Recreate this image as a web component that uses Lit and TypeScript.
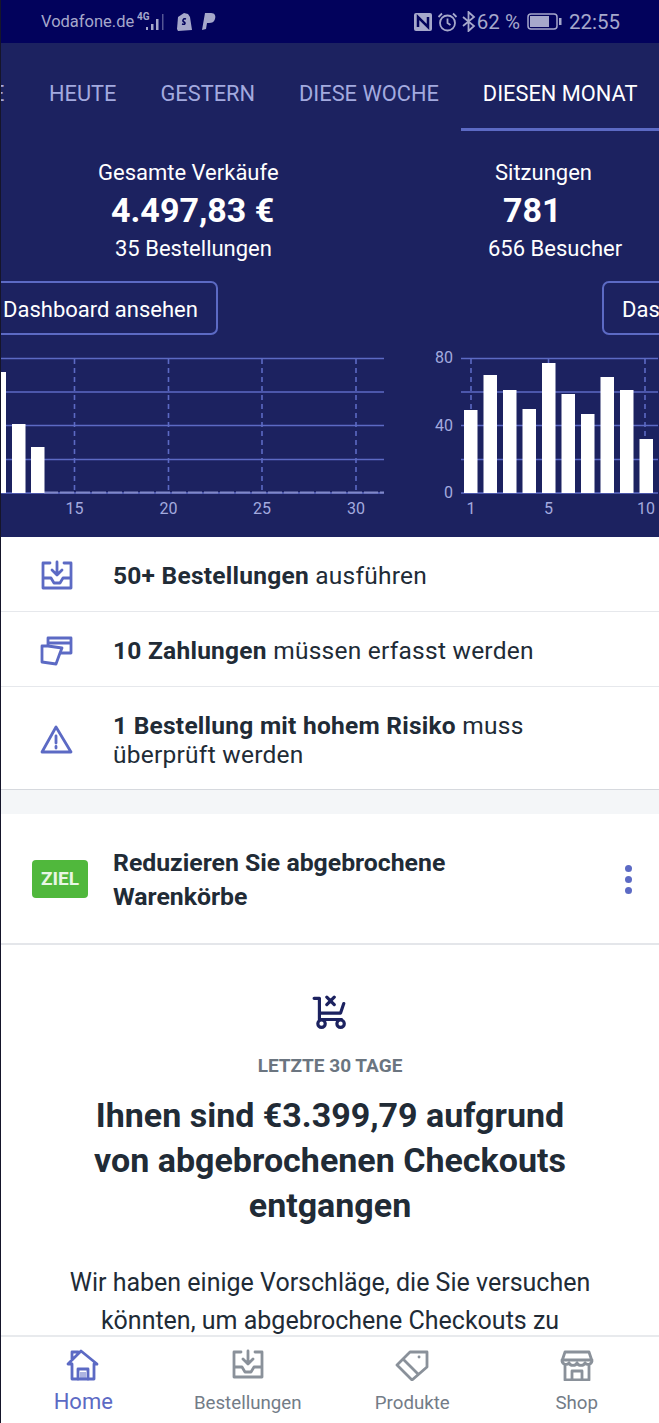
import { LitElement, html, css, svg } from 'lit';
import { customElement } from 'lit/decorators.js';

const GRID = '#5c6ac4';
const AXIS = '#a3aadf';

const icons = {
  inbox: svg`<path d="M10 3H3v25h28V3h-7M3 18h8l3 5h6l3-5h8M17 2v12M12 10l5 5 5-5"/>`,
  cards: svg`<path d="M8 10V3h23v15H21M8 8h23"/><path d="M2 11h6l14 2-2 5-4 11-14-2z"/>`,
  alert: svg`<path d="M16 3 2 28h29zM16 12v7"/><path d="M16 22.500v1.500"/>`,
  home: svg`<path d="M2 15 15 2l16 13h-3v15H6V15zM6 11V3h6"/><path d="M12 30V20h10v10"/><path d="M14 23h6v6h-6z" fill="currentColor" stroke="none" opacity=".5"/>`,
  tag: svg`<path d="M15 3h17v15L17 31 2 16zM8 10l15 15"/><path d="M24 8h.1"/>`,
  store: svg`<path d="M5 3h24l3 9a4 4 0 0 1-7 2 4.500 4.500 0 0 1-8 0 4.500 4.500 0 0 1-8 0 4 4 0 0 1-7-2zM2 11h30M5 16v15h24V16M12 31v-9h10v9"/>`,
};

const icon = (name: keyof typeof icons, cls = '') =>
  html`<svg class="icon ${cls}" viewBox="0 0 34 32">${icons[name]}</svg>`;

const gridLines = (x1: number, x2: number) =>
  [358.5, 392, 425.5, 459.5, 493].map(
    (y) => svg`<line x1=${x1} x2=${x2} y1=${y} y2=${y} stroke=${GRID} stroke-width="1.6"/>`
  );

const dashes = (xs: number[]) =>
  xs.map(
    (x) =>
      svg`<line x1=${x} x2=${x} y1="359" y2="490" stroke=${GRID} stroke-width="1.6" stroke-dasharray="5 4"/>`
  );

const bars = (list: number[][]) =>
  list.map(([x, top]) => svg`<rect x=${x} y=${top} width="13.500" height=${493 - top} fill="#fff"/>`);

const labels = (list: [string, number, number, string?][]) =>
  list.map(
    ([t, x, y, anchor]) =>
      svg`<text x=${x} y=${y} fill=${AXIS} font-size="16" text-anchor=${anchor ?? 'middle'}>${t}</text>`
  );

const salesChart = svg`
  ${gridLines(0, 384)}
  ${dashes([74.5, 168.5, 262, 356])}
  <path d="M44 492.500H384" stroke="#8088c8" stroke-width="2" stroke-dasharray="14 2"/>
  ${bars([[-7.500, 372], [12, 424], [31, 447]])}
  ${labels([['15', 74.5, 514], ['20', 168.5, 514], ['25', 262, 514], ['30', 356, 514]])}
`;

const visits = [410, 375, 390, 409, 363, 394, 414, 377, 390, 439, 377];
const visitsChart = svg`
  ${gridLines(61, 259)}
  ${dashes([71, 148.5, 245])}
  ${bars(visits.map((top, i) => [64 + i * 19.5, top]))}
  ${labels([
    ['80', 53, 363, 'end'], ['40', 53, 431, 'end'], ['0', 53, 498, 'end'],
    ['1', 71, 514], ['5', 148.5, 514], ['10', 246, 514],
  ])}
`;

@customElement('app-root')
export class AppRoot extends LitElement {
  static styles = css`
    :host {
      display: flex;
      flex-direction: column;
      height: 1423px;
      overflow: hidden;
      background: #fff;
      color: #212b36;
      font-family: Roboto, 'Noto Sans', sans-serif;
      box-sizing: border-box;
      border-left: 1px solid #15152a;
    }
    .icon {
      fill: none;
      stroke: currentColor;
      stroke-width: 2.8;
      stroke-linejoin: round;
      stroke-linecap: round;
      flex: none;
    }

    .status {
      height: 43px;
      flex: none;
      background: #02025c;
      color: #a6a8cb;
      display: flex;
      align-items: center;
      padding: 0 39px 0 40px;
      font-size: 16.500px;
    }
    .status svg { flex: none; }
    .carrier { margin-right: 3px; }
    .status-right {
      margin-left: auto;
      display: flex;
      align-items: center;
      gap: 4px;
      font-size: 20.500px;
    }
    .status-right .clock { margin-left: 3px; }
    .status-right .pct { margin-left: -3px; }
    .status-right .batt { margin-left: 3px; }
    .shop { margin-left: 9px; }
    .pp { margin-left: 9px; }

    .hero {
      flex: none;
      height: 494px;
      background: #1c2260;
      overflow: hidden;
    }
    .tabs {
      display: flex;
      height: 88px;
      font-size: 21.800px;
      color: #a3aadf;
      white-space: nowrap;
    }
    .tab {
      padding: 37px 22px 0;
      box-sizing: border-box;
      line-height: 27px;
    }
    .tab.cut { margin-left: -22px; padding-right: 23px; width: 48px; padding-left: 13px; }
    .tab.on {
      color: #fff;
      border-bottom: 3px solid #5c6ac4;
      flex: 1;
    }

    .cards { display: flex; }
    .card { flex: none; width: 400px; color: #fff; font-size: 22px; }
    .card.b { width: 258px; }
    .stat { height: 29px; line-height: 29px; white-space: nowrap; }
    .stat.first { margin-top: 27px; }
    .value { height: 47px; line-height: 47px; font-size: 34px; font-weight: 700; white-space: nowrap; }
    .a .label { margin-left: 97px; }
    .a .value { margin-left: 110px; }
    .a .sub { margin-left: 114px; }
    .b .label { margin-left: 94px; }
    .b .value { margin-left: 102px; }
    .b .sub { margin-left: 87px; }
    .btn {
      display: inline-block;
      box-sizing: border-box;
      height: 54px;
      line-height: 54px;
      margin-top: 18px;
      border: 2px solid #5c6ac4;
      border-radius: 7px;
      font-size: 22px;
      white-space: nowrap;
      padding: 0 18px 0 20px;
    }
    .btn span { display: block; height: 50px; }
    .a .btn { margin-left: -20px; }
    .b .btn { margin-left: 201px; padding-left: 18px; }
    .chart {
      display: block;
      height: 187px;
      margin: 15px 0 0 -1px;
      font-family: Roboto, sans-serif;
    }
    .a .chart { width: 400px; }
    .b .chart { width: 258px; }

    main { flex: 1; min-height: 0; overflow: hidden; background: #fff; }
    .row {
      display: flex;
      align-items: center;
      box-sizing: border-box;
      height: 75px;
      padding-top: 3px;
      border-bottom: 1px solid #e6e8ec;
      font-size: 24.500px;
      line-height: 29px;
    }
    .row.tall { height: 103px; border-bottom: 1px solid #d6d9de; }
    .row .icon {
      width: 34px;
      height: 32px;
      margin: 0 39px 0 39px;
      color: #5c6ac4;
    }
    .row-text { letter-spacing: 0.25px; padding-right: 100px; }
    b { font-weight: 700; }
    .band { height: 24px; background: #f4f6f8; }
    .goal {
      display: flex;
      align-items: center;
      height: 131px;
      padding-top: 2px;
      border-bottom: 2px solid #e4e6ea;
      box-sizing: border-box;
    }
    .pill {
      width: 56px;
      height: 38px;
      line-height: 38px;
      margin: -2px 25px 0 31px;
      text-align: center;
      border-radius: 4px;
      background: #50b83c;
      color: #e8f6e4;
      font-size: 19px;
      font-weight: 700;
      flex: none;
    }
    .goal-title { flex: 1; font-size: 24.800px; line-height: 34px; font-weight: 700; }
    .more { display: flex; flex-direction: column; gap: 4px; margin-right: 27px; }
    .more i { width: 7px; height: 7px; border-radius: 50%; background: #5c6ac4; }

    .advice { text-align: center; padding-top: 48px; }
    .cart { display: block; width: 36px; height: 36px; margin: 0 auto; color: #1c2260; stroke-width: 3; }
    .period { margin-top: 25px; font-size: 19px; line-height: 24px; font-weight: 700; color: #6b7580; }
    h2 { margin: 15px 0 0; font-size: 34px; line-height: 45px; font-weight: 700; }
    .advice p { margin: 36px 0 0; font-size: 25px; line-height: 38px; }

    nav {
      flex: none;
      height: 86px;
      display: grid;
      grid-template-columns: repeat(4, 1fr);
      border-top: 2px solid #e8eaed;
      background: #fff;
      color: #737c87;
      font-size: 18.700px;
    }
    .item { display: flex; flex-direction: column; align-items: center; padding-top: 12px; }
    .item .icon { width: 34px; height: 32px; color: #8a919a; }
    .item span { line-height: 24px; margin-top: 10px; }
    .item.on { color: #5c6ac4; font-size: 22px; }
    .item.on .icon { color: #5c6ac4; }
    .item.on span { margin-top: 9px; }
  `;

  render() {
    return html`
      <div class="status">
        <span class="carrier">Vodafone.de</span>
        <svg width="30" height="22" viewBox="0 0 30 22" fill="currentColor">
          <text x="0" y="9" font-size="10" font-weight="700">4G</text>
          <rect x="9" y="16" width="2" height="3"/><rect x="14" y="13" width="2.500" height="6"/>
          <rect x="19" y="8" width="2.500" height="11"/><rect x="25" y="3" width="1.500" height="16" opacity=".5"/>
        </svg>
        <svg class="shop" width="17" height="19" viewBox="0 0 17 19">
          <path d="M2 5 8 1l4 1 2 3 2 13-14 1-1-2z" fill="currentColor"/>
          <path d="M10 7c-3-1-4 2-2 3s1 3-2 2" stroke="#02025c" stroke-width="1.500" fill="none"/>
        </svg>
        <svg class="pp" width="14" height="18" viewBox="0 0 14 18" fill="currentColor">
          <path d="M3 0h6c4 0 5 3 4 6-1 3-3 4-6 4H5l-1 6-4 1z"/>
        </svg>
        <div class="status-right">
          <svg width="20" height="20" viewBox="0 0 20 20">
            <rect x="1" y="1" width="18" height="18" rx="2" fill="currentColor"/>
            <path d="M5 15V5l10 10V5" stroke="#02025c" stroke-width="2.500" fill="none"/>
          </svg>
          <svg width="21" height="20" viewBox="0 0 21 20" fill="none" stroke="currentColor" stroke-width="1.800">
            <circle cx="10.500" cy="11" r="7.500"/><path d="M10.500 6.500V11l3 2M1.500 5 5 1.500M16 1.500 19.500 5"/>
          </svg>
          <svg width="14" height="21" viewBox="0 0 14 21" fill="none" stroke="currentColor" stroke-width="1.800">
            <path d="m1 6 11 9-5.500 5V1L12 6 1 15"/>
          </svg>
          <span class="pct">62 %</span>
          <svg class="batt" width="35" height="17" viewBox="0 0 35 17">
            <rect x="1" y="1" width="29" height="15" rx="3" fill="none" stroke="currentColor" stroke-width="1.500"/>
            <rect x="3" y="3" width="19" height="11" fill="currentColor"/>
            <rect x="32" y="5" width="2.500" height="7" fill="currentColor"/>
          </svg>
          <span class="clock">22:55</span>
        </div>
      </div>

      <section class="hero">
        <div class="tabs">
          <div class="tab cut">E</div>
          <div class="tab">HEUTE</div>
          <div class="tab">GESTERN</div>
          <div class="tab">DIESE WOCHE</div>
          <div class="tab on">DIESEN MONAT</div>
        </div>
        <div class="cards">
          <div class="card a">
            <div class="stat label first">Gesamte Verkäufe</div>
            <div class="value">4.497,83 €</div>
            <div class="stat sub">35 Bestellungen</div>
            <div class="btn"><span>Dashboard ansehen</span></div>
            <svg class="chart" viewBox="0 350 400 187">${salesChart}</svg>
          </div>
          <div class="card b">
            <div class="stat label first">Sitzungen</div>
            <div class="value">781</div>
            <div class="stat sub">656 Besucher</div>
            <div class="btn"><span>Dashboard ansehen</span></div>
            <svg class="chart" viewBox="0 350 258 187">${visitsChart}</svg>
          </div>
        </div>
      </section>

      <main>
        <div class="row">
          ${icon('inbox')}
          <div class="row-text"><b>50+ Bestellungen</b> ausführen</div>
        </div>
        <div class="row">
          ${icon('cards')}
          <div class="row-text"><b>10 Zahlungen</b> müssen erfasst werden</div>
        </div>
        <div class="row tall">
          ${icon('alert')}
          <div class="row-text"><b>1 Bestellung mit hohem Risiko</b> muss überprüft werden</div>
        </div>
        <div class="band"></div>
        <div class="goal">
          <div class="pill">ZIEL</div>
          <div class="goal-title">Reduzieren Sie abgebrochene<br />Warenkörbe</div>
          <div class="more"><i></i><i></i><i></i></div>
        </div>
        <div class="advice">
          <svg class="icon cart" viewBox="0 0 34 34">
            <path d="M2 5h5v20h21M7 19h20l3-9M14 4l7 7M21 4l-7 7"/>
            <circle cx="9" cy="29" r="3.500"/><circle cx="27" cy="29" r="3.500"/>
          </svg>
          <div class="period">LETZTE 30 TAGE</div>
          <h2>Ihnen sind €3.399,79 aufgrund<br />von abgebrochenen Checkouts<br />entgangen</h2>
          <p>Wir haben einige Vorschläge, die Sie versuchen<br />könnten, um abgebrochene Checkouts zu</p>
        </div>
      </main>

      <nav>
        <div class="item on">${icon('home')}<span>Home</span></div>
        <div class="item">${icon('inbox')}<span>Bestellungen</span></div>
        <div class="item">${icon('tag')}<span>Produkte</span></div>
        <div class="item">${icon('store')}<span>Shop</span></div>
      </nav>
    `;
  }
}
